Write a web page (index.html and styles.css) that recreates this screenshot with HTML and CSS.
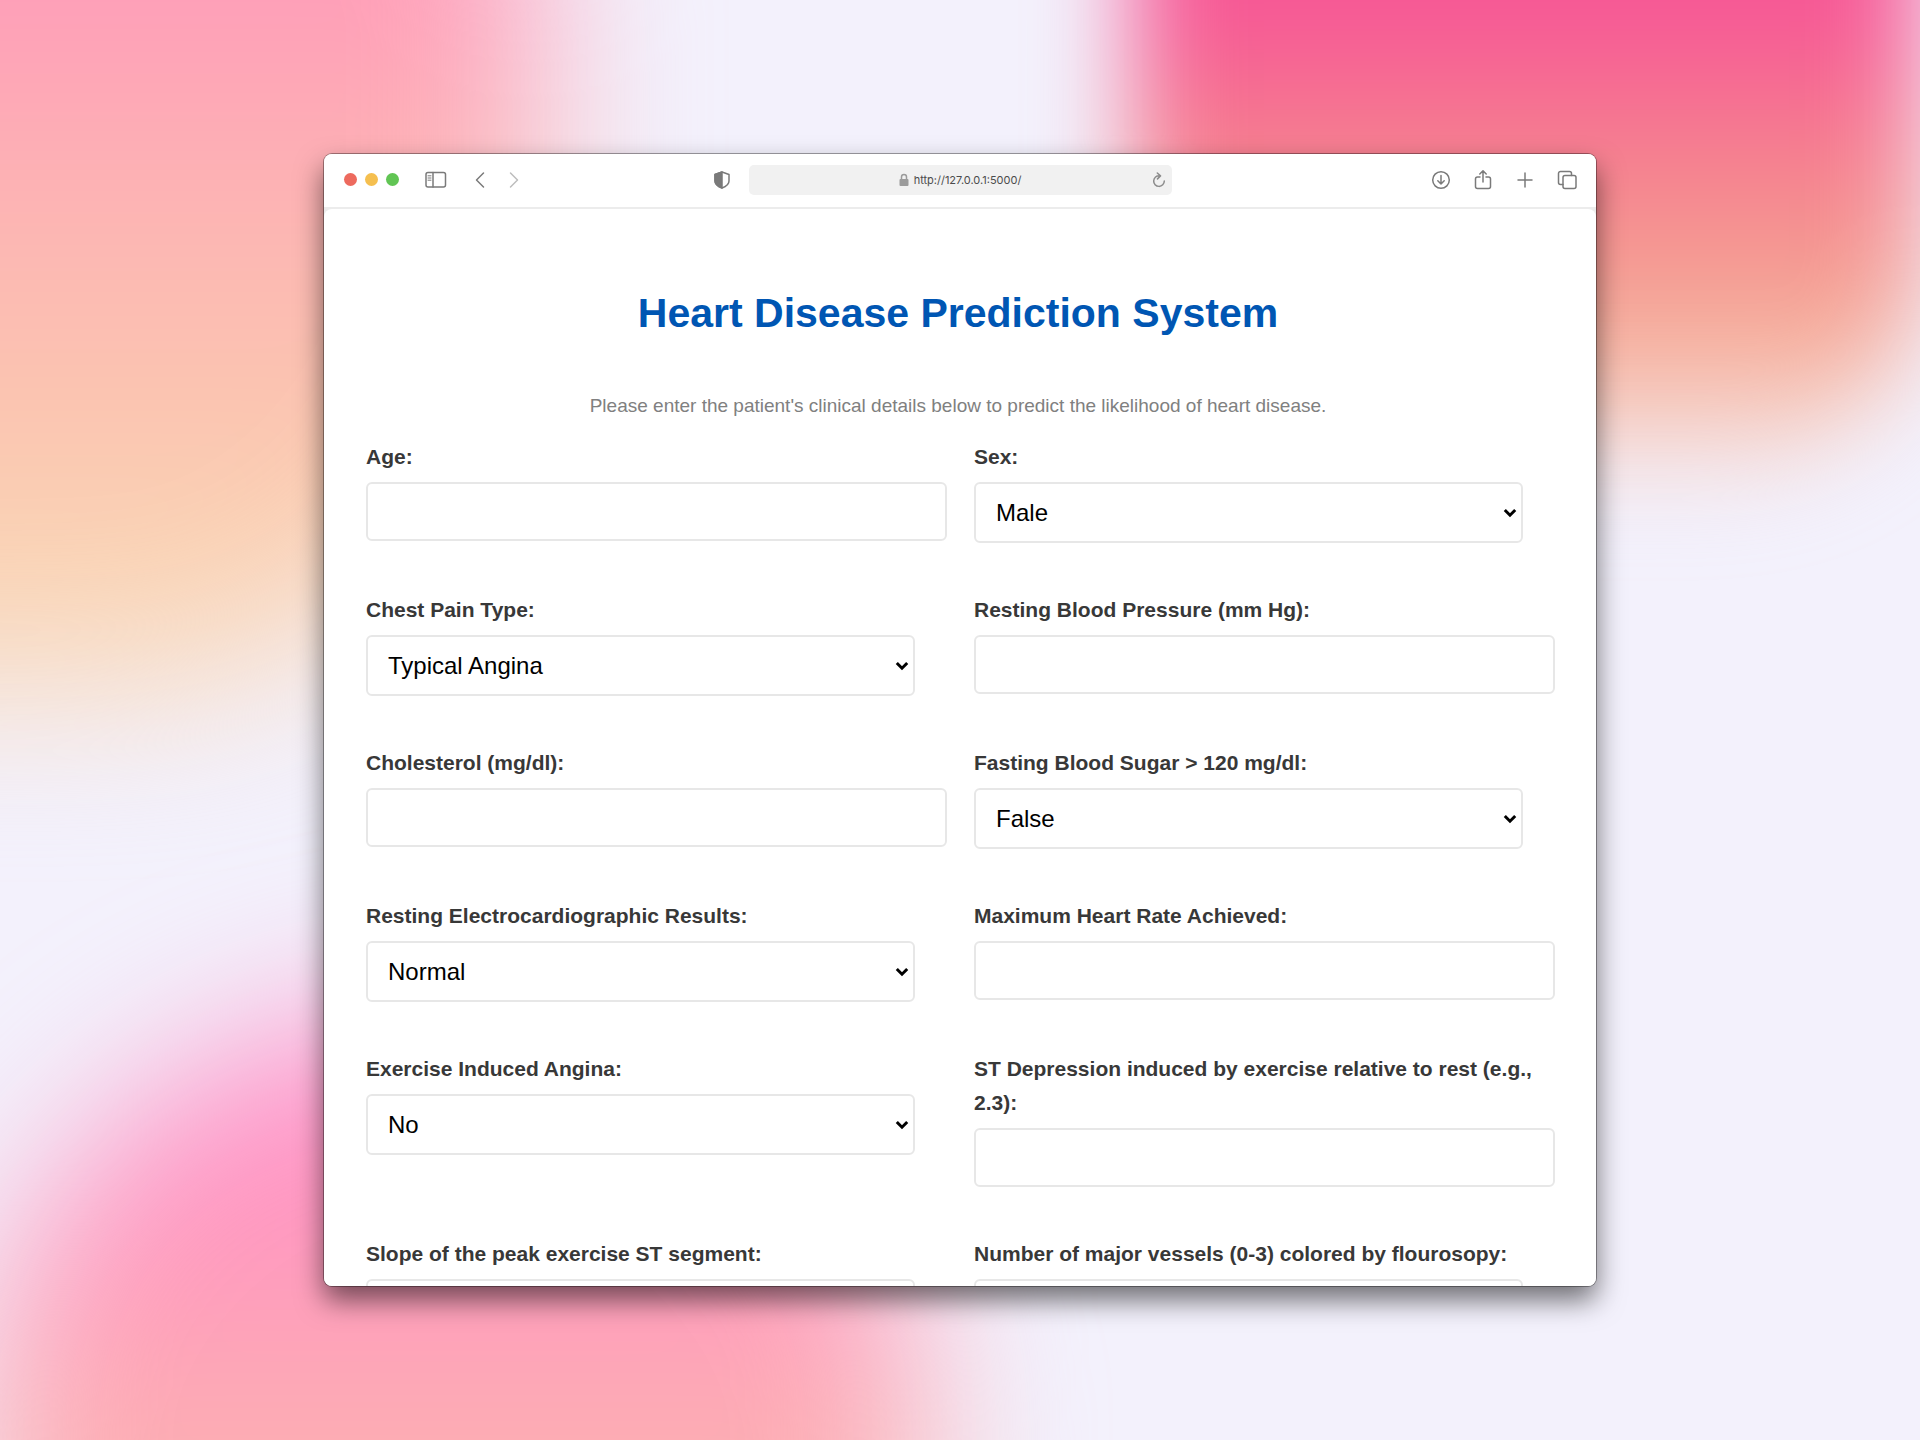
FILE: index.html
```html
<!DOCTYPE html>
<html lang="en">
<head>
<meta charset="utf-8">
<meta name="viewport" content="width=device-width, initial-scale=1">
<title>Heart Disease Prediction System</title>
<link rel="stylesheet" href="styles.css">
</head>
<body class="desktop">
<div class="wallpaper" aria-hidden="true">
  <div class="blob blob-peach"></div>
  <div class="blob blob-rose"></div>
  <div class="blob blob-pink"></div>
</div>
<div class="window">
  <header class="toolbar">
    <div class="toolbar-side">
      <div class="lights"><span class="light red"></span><span class="light yellow"></span><span class="light green"></span></div>
      <button class="icon-button sidebar-button" type="button" aria-label="Sidebar">
        <svg width="22" height="18" viewBox="0 0 22 18"><rect x="1" y="1.5" width="19.5" height="14.5" rx="2"/><path d="M8 1.5v14.5"/><path class="thin" d="M3 4.800h3M3 7h3M3 9.200h3"/></svg>
      </button>
      <button class="icon-button" type="button" aria-label="Back">
        <svg width="10" height="18" viewBox="0 0 10 18"><path d="M8.500 2L1.500 9l7 7"/></svg>
      </button>
      <button class="icon-button forward-button" type="button" aria-label="Forward">
        <svg width="10" height="18" viewBox="0 0 10 18"><path d="M1.500 2l7 7-7 7"/></svg>
      </button>
    </div>
    <div class="address">
      <button class="icon-button" type="button" aria-label="Privacy report">
        <svg width="16" height="18" viewBox="0 0 16 18"><path d="M8 1L15 3.500V10c0 3.500-3.500 5.700-7 7-3.500-1.300-7-3.500-7-7V3.500z"/><path class="solid" d="M8 1v16c-3.500-1.300-7-3.500-7-7V3.500z"/></svg>
      </button>
      <div class="url-bar">
        <svg class="lock" width="10" height="14" viewBox="0 0 10 14"><path d="M2.500 6.500V4a2.500 2.500 0 0 1 5 0v2.500"/><rect class="lock-body" x="0.500" y="6" width="9" height="7" rx="1"/></svg>
        <span class="url">http://127.0.0.1:5000/</span>
        <button class="icon-button reload" type="button" aria-label="Reload">
          <svg width="14" height="16" viewBox="0 0 14 16"><path d="M7.500 3.800A5.300 5.300 0 1 0 12.300 9M5.300 1l3.200 2.900-3 3"/></svg>
        </button>
      </div>
    </div>
    <div class="toolbar-side toolbar-actions">
      <button class="icon-button" type="button" aria-label="Downloads">
        <svg width="20" height="20" viewBox="0 0 20 20"><circle cx="10" cy="10" r="8.300"/><path d="M10 5.500v8.500M6.800 10.800l3.200 3.200 3.200-3.200"/></svg>
      </button>
      <button class="icon-button" type="button" aria-label="Share">
        <svg width="20" height="20" viewBox="0 0 20 20"><path d="M7 7H4.500a2 2 0 0 0-2 2v7.500a2 2 0 0 0 2 2h11a2 2 0 0 0 2-2V9a2 2 0 0 0-2-2H13M10 12V1M6.800 4L10 .8 13.200 4"/></svg>
      </button>
      <button class="icon-button" type="button" aria-label="New tab">
        <svg width="20" height="20" viewBox="0 0 20 20"><path d="M10 3v14M3 10h14"/></svg>
      </button>
      <button class="icon-button" type="button" aria-label="Tab overview">
        <svg width="20" height="20" viewBox="0 0 20 20"><rect x="6" y="5.500" width="13" height="13" rx="2"/><path d="M6 14.500H3.500a2 2 0 0 1-2-2V3.500a2 2 0 0 1 2-2h9a2 2 0 0 1 2 2v2"/></svg>
      </button>
    </div>
  </header>
  <div class="viewport">
  <main class="page">
    <h1 class="title">Heart Disease Prediction System</h1>
    <p class="intro">Please enter the patient's clinical details below to predict the likelihood of heart disease.</p>
    <form class="form">
      <div class="field">
        <label for="age">Age:</label>
        <input id="age" type="text">
      </div>
      <div class="field">
        <label for="sex">Sex:</label>
        <div class="select"><select id="sex"><option>Male</option><option>Female</option></select><svg class="arrow" width="14" height="10" viewBox="0 0 14 10"><path d="M1.800 2L7 7.200 12.200 2"/></svg></div>
      </div>
      <div class="field">
        <label for="cp">Chest Pain Type:</label>
        <div class="select"><select id="cp"><option>Typical Angina</option></select><svg class="arrow" width="14" height="10" viewBox="0 0 14 10"><path d="M1.800 2L7 7.200 12.200 2"/></svg></div>
      </div>
      <div class="field">
        <label for="bp">Resting Blood Pressure (mm Hg):</label>
        <input id="bp" type="text">
      </div>
      <div class="field">
        <label for="chol">Cholesterol (mg/dl):</label>
        <input id="chol" type="text">
      </div>
      <div class="field">
        <label for="fbs">Fasting Blood Sugar &gt; 120 mg/dl:</label>
        <div class="select"><select id="fbs"><option>False</option><option>True</option></select><svg class="arrow" width="14" height="10" viewBox="0 0 14 10"><path d="M1.800 2L7 7.200 12.200 2"/></svg></div>
      </div>
      <div class="field">
        <label for="ecg">Resting Electrocardiographic Results:</label>
        <div class="select"><select id="ecg"><option>Normal</option></select><svg class="arrow" width="14" height="10" viewBox="0 0 14 10"><path d="M1.800 2L7 7.200 12.200 2"/></svg></div>
      </div>
      <div class="field">
        <label for="rate">Maximum Heart Rate Achieved:</label>
        <input id="rate" type="text">
      </div>
      <div class="field">
        <label for="exang">Exercise Induced Angina:</label>
        <div class="select"><select id="exang"><option>No</option><option>Yes</option></select><svg class="arrow" width="14" height="10" viewBox="0 0 14 10"><path d="M1.800 2L7 7.200 12.200 2"/></svg></div>
      </div>
      <div class="field">
        <label for="st">ST Depression induced by exercise relative to rest (e.g., 2.3):</label>
        <input id="st" type="text">
      </div>
      <div class="field">
        <label for="slope">Slope of the peak exercise ST segment:</label>
        <div class="select"><select id="slope"></select></div>
      </div>
      <div class="field">
        <label for="vessels">Number of major vessels (0-3) colored by flourosopy:</label>
        <div class="select"><select id="vessels"></select></div>
      </div>
    </form>
  </main>
  </div>
</div>
</body>
</html>
```
FILE: styles.css
```css
* { box-sizing: border-box; }

.desktop {
  margin: 0;
  height: 100vh;
  padding: 154px 24px;
  overflow: hidden;
  background: #f3f1fc;
  font-family: "Liberation Sans", Arial, sans-serif;
}

/* Wallpaper: three soft colour fields behind the window */
.wallpaper {
  position: absolute;
  inset: 0;
  overflow: hidden;
}
.blob {
  position: absolute;
  filter: blur(80px);
}
.blob-peach {
  left: -20%;
  top: -20%;
  width: 48%;
  height: 68%;
  border-radius: 0 30% 45% 0;
  background: linear-gradient(#ff9cb9 28%, #fdb3b4 48%, #fbc8b0 75%, #f9d8b8 90%);
}
.blob-rose {
  left: 59%;
  top: -20%;
  width: 41%;
  height: 54%;
  border-radius: 10% 10% 30% 40%;
  filter: blur(48px);
  background: linear-gradient(#f65596 37%, #f5808f 57%, #f4a092 74%, #f6c0ae 86%, rgba(246, 208, 190, 0));
}
.blob-pink {
  left: -1%;
  top: 70%;
  width: 49%;
  height: 56%;
  border-radius: 50% 50% 0 0;
  background: linear-gradient(#ff92cc, #ff94c4 20%, #ff9dbc 34%, #fcb0b2 55%);
}

/* Browser window */
.window {
  position: relative;
  display: flex;
  flex-direction: column;
  max-width: 1272px;
  height: 100%;
  margin: 0 auto;
  overflow: hidden;
  border-radius: 8px;
  background: #ececec;
  box-shadow: 0 0 0 1px rgba(0, 0, 0, .35), 0 14px 28px rgba(0, 0, 0, .55);
}
.toolbar {
  display: grid;
  grid-template-columns: 1fr auto 1fr;
  align-items: center;
  flex: none;
  height: 55px;
  padding: 0 19px 2px 20px;
  border-bottom: 2px solid #ececec;
  background: #fff;
}
.toolbar-side {
  display: flex;
  align-items: center;
  gap: 24px;
}
.toolbar-actions {
  justify-content: flex-end;
  gap: 22px;
}
.lights {
  display: flex;
  gap: 8px;
}
.light {
  width: 13px;
  height: 13px;
  border-radius: 50%;
}
.red { background: #ed6a5e; }
.yellow { background: #f5bf4f; }
.green { background: #61c554; }

.icon-button {
  display: flex;
  padding: 0;
  border: 0;
  background: none;
  color: #7a7a7a;
}
.icon-button svg,
.lock {
  fill: none;
  stroke: currentColor;
  stroke-width: 1.5;
  stroke-linecap: round;
  stroke-linejoin: round;
}
.icon-button .thin { stroke-width: 1; }
.icon-button .solid { fill: currentColor; }
.sidebar-button { margin: 0 4px 0 2px; }
.forward-button { color: #bdbdbd; }

.address {
  display: flex;
  align-items: center;
  gap: 19px;
  margin-right: 36px;
}
.url-bar {
  display: grid;
  grid-template-columns: 1fr auto auto 1fr;
  align-items: center;
  gap: 5px;
  width: 423px;
  height: 30px;
  padding: 0 6px;
  border-radius: 5px;
  background: #f1f1f1;
}
.lock {
  grid-column: 2;
  color: #9b9b9b;
}
.lock-body { fill: currentColor; stroke: none; }
.url {
  font: 11px/16px Inter, sans-serif;
  color: #4c4c4c;
}
.reload {
  justify-self: end;
  color: #8c8c8c;
}

/* Prediction form */
.viewport {
  flex: 1;
  overflow: hidden;
  border-radius: 8px 8px 0 0;
  background: #fff;
}
.page { padding: 71px 46px 42px 42px; }
.title {
  margin: 0 0 44px;
  font-size: 41px;
  line-height: 66px;
  text-align: center;
  color: #0056b3;
}
.intro {
  margin: 0 0 18px;
  font-size: 19px;
  line-height: 32px;
  text-align: center;
  color: #808080;
}
.form {
  display: grid;
  grid-template-columns: repeat(2, minmax(0, 1fr));
  gap: 50px 27px;
  align-items: start;
  margin-right: -5px;
}
.field {
  display: flex;
  flex-direction: column;
  gap: 8px;
}
.field label {
  font-size: 21px;
  font-weight: bold;
  line-height: 34px;
  color: #383838;
}
.field input,
.field select {
  width: 100%;
  border: 2px solid #e7e7e7;
  border-radius: 6px;
  background: #fff;
  font-family: inherit;
  font-size: 24px;
  color: #000;
}
.field input {
  height: 59px;
  padding: 0 16px;
}
.select {
  display: grid;
  grid-template-columns: 1fr auto;
  align-items: center;
  margin-right: 32px;
}
.field select {
  grid-area: 1 / 1 / 2 / 3;
  height: 61px;
  padding: 0 20px;
  appearance: none;
}
.arrow {
  grid-area: 1 / 2;
  margin-right: 6px;
  fill: none;
  stroke: #000;
  stroke-width: 3;
  pointer-events: none;
  z-index: 1;
}
```
